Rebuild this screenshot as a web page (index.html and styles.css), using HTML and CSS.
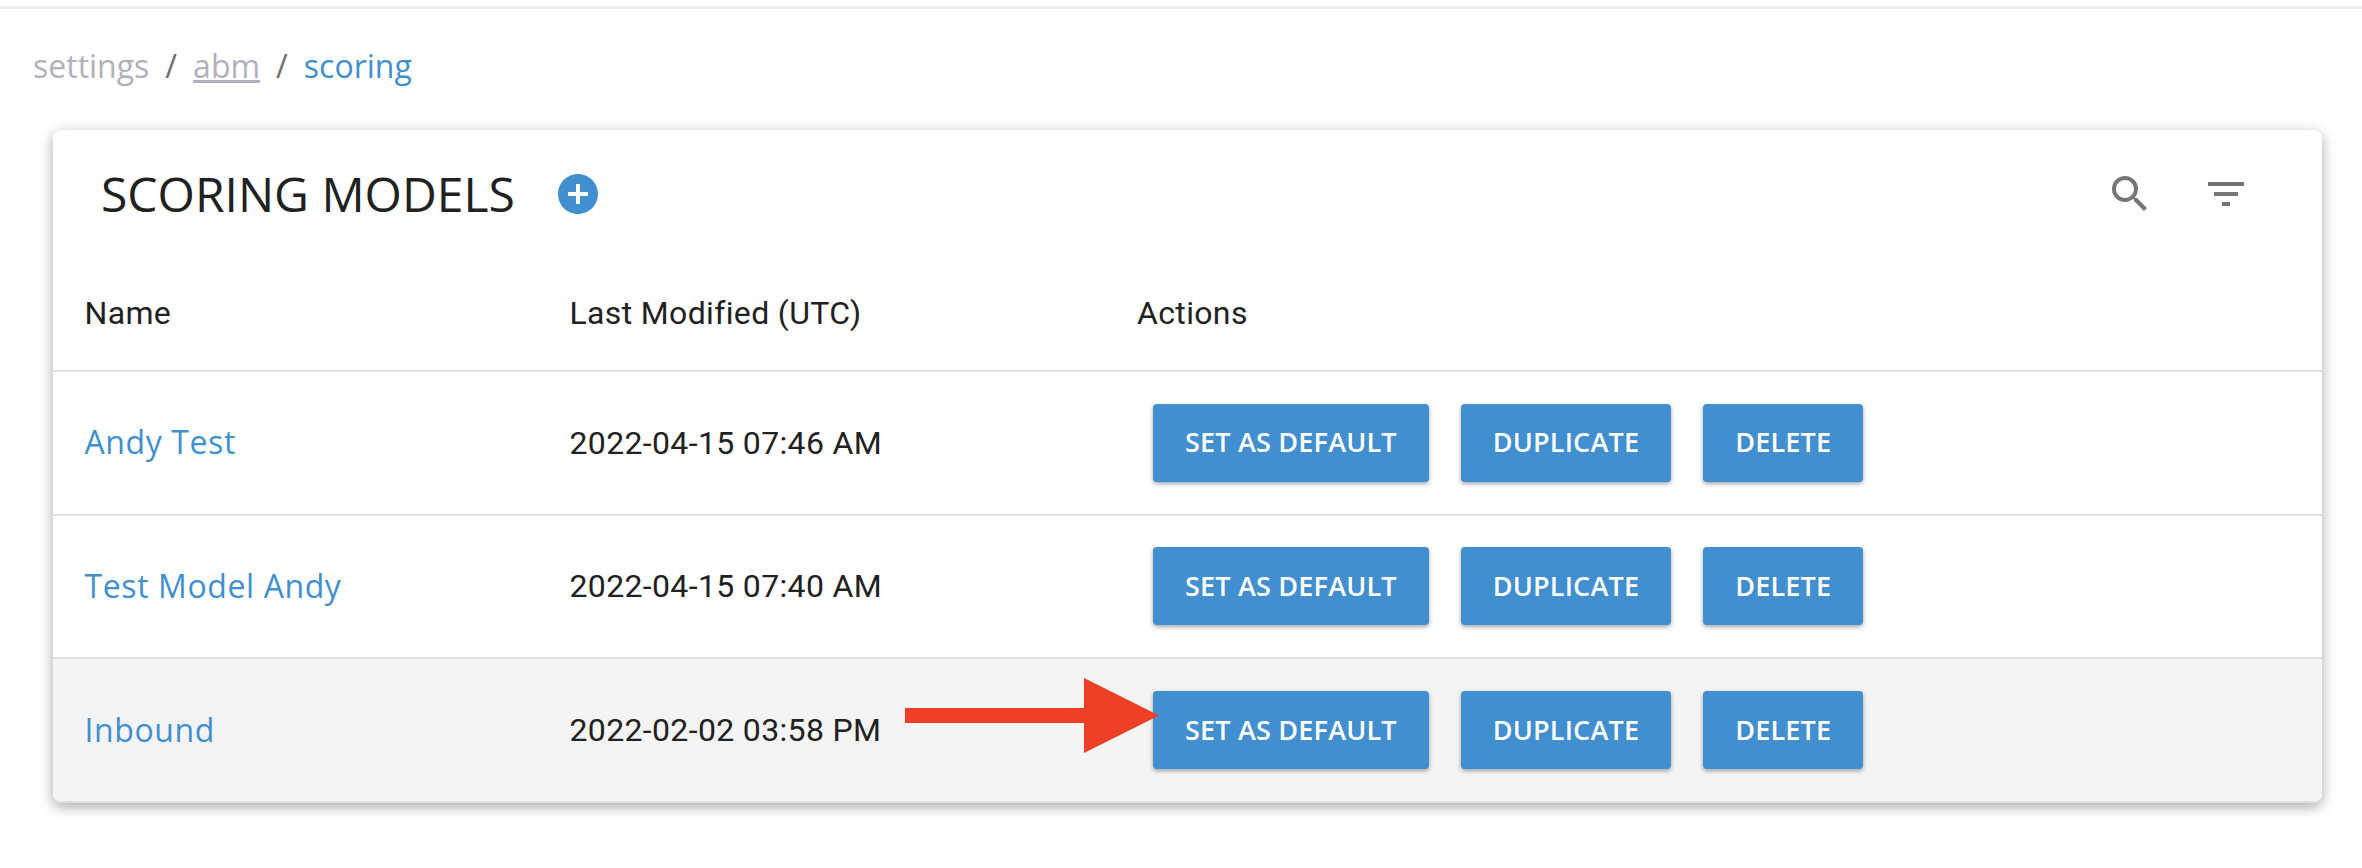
FILE: index.html
```html
<!DOCTYPE html>
<html lang="en">
<head>
<meta charset="utf-8">
<title>Scoring Models</title>
<link rel="stylesheet" href="styles.css">
</head>
<body>
<div class="topline"></div>
<nav class="crumbs">
  <span class="crumb-muted">settings</span>
  <span class="sep">/</span>
  <a class="crumb-link">abm</a>
  <span class="sep">/</span>
  <span class="crumb-current">scoring</span>
</nav>
<main class="card">
  <header class="card-head">
    <h1 class="title">SCORING MODELS</h1>
    <svg class="icon add" viewBox="0 0 24 24"><path d="M12 2C6.48 2 2 6.48 2 12s4.48 10 10 10 10-4.48 10-10S17.52 2 12 2zm5 11h-4v4h-2v-4H7v-2h4V7h2v4h4v2z"/></svg>
    <div class="tools">
      <svg class="icon tool" viewBox="0 0 24 24"><path d="M15.5 14h-.79l-.28-.27A6.47 6.47 0 0 0 16 9.5 6.5 6.5 0 1 0 9.5 16c1.61 0 3.09-.59 4.23-1.57l.27.28v.79l5 4.99L20.49 19l-4.99-5zm-6 0C7.01 14 5 11.99 5 9.5S7.01 5 9.5 5 14 7.01 14 9.5 11.99 14 9.5 14z"/></svg>
      <svg class="icon tool" viewBox="0 0 24 24"><path d="M10 18h4v-2h-4v2zM3 6v2h18V6H3zm3 7h12v-2H6v2z"/></svg>
    </div>
  </header>
  <div class="row row-head">
    <div>Name</div>
    <div>Last Modified (UTC)</div>
    <div>Actions</div>
  </div>
  <div class="row">
    <a class="name">Andy Test</a>
    <div class="date">2022-04-15 07:46 AM</div>
    <div class="actions"><button class="btn">SET AS DEFAULT</button><button class="btn">DUPLICATE</button><button class="btn">DELETE</button></div>
  </div>
  <div class="row">
    <a class="name">Test Model Andy</a>
    <div class="date">2022-04-15 07:40 AM</div>
    <div class="actions"><button class="btn">SET AS DEFAULT</button><button class="btn">DUPLICATE</button><button class="btn">DELETE</button></div>
  </div>
  <div class="row row-hover">
    <a class="name">Inbound</a>
    <div class="date">2022-02-02 03:58 PM</div>
    <div class="actions"><button class="btn">SET AS DEFAULT</button><button class="btn">DUPLICATE</button><button class="btn">DELETE</button></div>
    <svg class="arrow" viewBox="0 0 254 75"><path d="M0 30h179V0l75 37.500-75 37.500V45H0z"/></svg>
  </div>
</main>
</body>
</html>
```
FILE: styles.css
```css
* { box-sizing: border-box; }
html, body { margin: 0; padding: 0; background: #fff; }
body { width: 2362px; height: 868px; overflow: hidden; font-family: "Open Sans", sans-serif; }

.topline { height: 9px; border-bottom: 3px solid #eeeeee; }

.crumbs { display: flex; align-items: center; height: 121px; padding: 0 0 8px 33px; font-size: 32px; color: #6f6f6f; }
.crumb-muted { color: #b0b0be; }
.crumb-link { color: #b0b0be; text-decoration: underline; }
.crumb-current { color: #418fcf; }
.sep { margin: 0 16px; }

.card { width: 2269px; margin-left: 53px; background: #fff; border-radius: 8px; border-bottom: 2px solid #e0e0e0; box-shadow: 0 4px 14px rgba(0,0,0,.34); overflow: hidden; height: 673px; position: relative; }

.card-head { display: flex; align-items: center; height: 128px; padding-left: 48px; }
.title { margin: 0; font-size: 48px; font-weight: 400; color: #212121; line-height: 1; }
.icon { display: block; width: 48px; height: 48px; flex: none; }
.add { fill: #418fcf; margin-left: 39px; }
.tools { margin-left: auto; margin-right: 72px; display: flex; gap: 48px; }
.tool { fill: #757575; }

.row { position: relative; display: grid; grid-template-columns: 485px 567.5px 1fr; align-items: center; height: 143.67px; padding-left: 31.500px; border-top: 2px solid #e0e0e0; }
.row-head { height: 112px; border-top: 0; font-family: Roboto, sans-serif; font-size: 32px; letter-spacing: .35px; color: #212121; padding-bottom: 2px; }
.row-hover { background: #f4f4f4; }

.name { font-size: 32px; letter-spacing: .6px; color: #418fcf; margin-bottom: 2px; }
.date { font-family: Roboto, sans-serif; font-size: 32px; letter-spacing: .35px; color: #212121; }

.actions { display: flex; gap: 32px; padding-left: 16px; }
.btn { height: 78px; padding: 0 32px 2px; border: 0; border-radius: 4px; background: #418fcf; color: #fff; font-family: "Open Sans", sans-serif; font-size: 27px; letter-spacing: .2px; font-weight: 600; box-shadow: 0 2px 4px rgba(0,0,0,.35); }

.arrow { position: absolute; left: 852px; top: 19px; width: 254px; height: 75px; fill: #ee4026; }
```
